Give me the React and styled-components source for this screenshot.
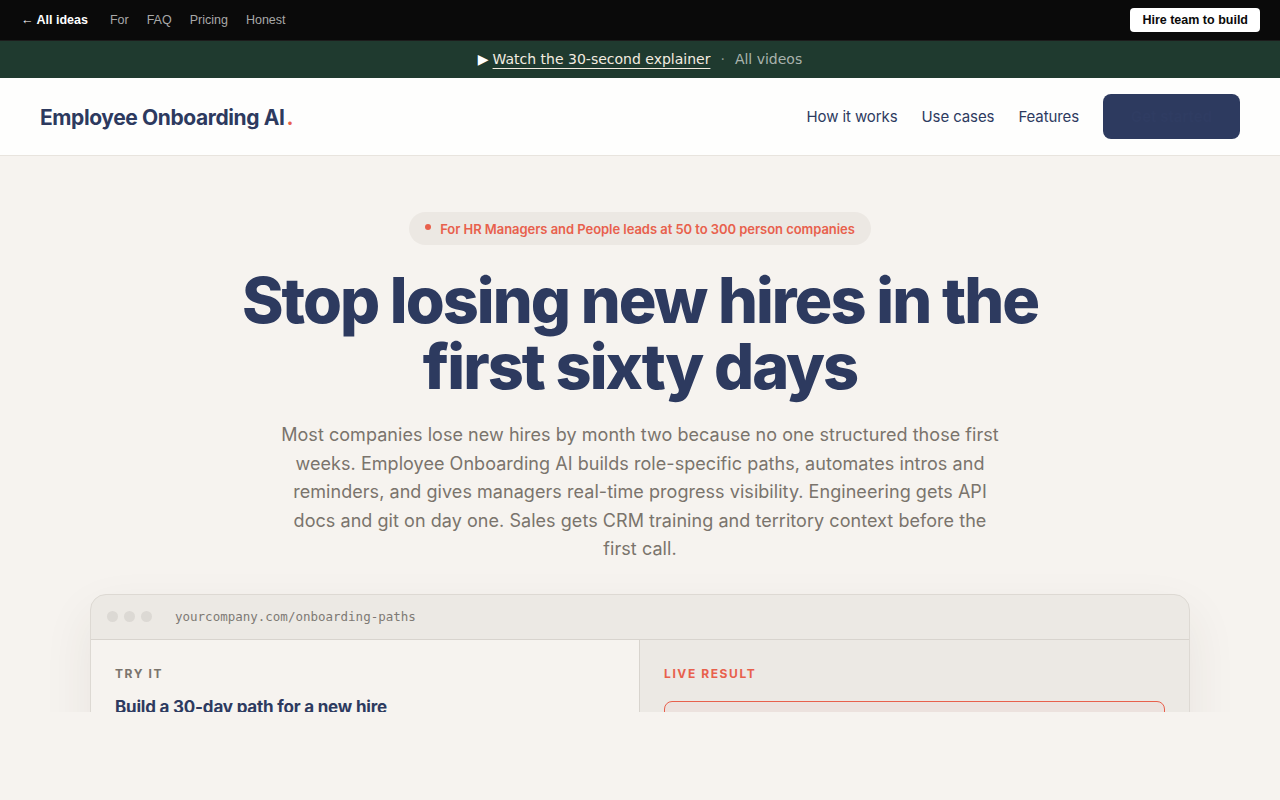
import React from 'react';
import styled, { createGlobalStyle } from 'styled-components';

const GlobalStyle = createGlobalStyle`
  html, body {
    margin: 0;
    padding: 0;
    background: #f6f3ef;
  }
  * {
    box-sizing: border-box;
  }
`;

const Page = styled.div`
  height: 712px;
  overflow: hidden;
  background: #f6f3ef;
  font-family: 'Inter', 'Noto Sans', sans-serif;
`;

const TopBar = styled.div`
  height: 41px;
  background: #0a0a0a;
  border-bottom: 1px solid #1c1c1c;
  display: flex;
  align-items: center;
  justify-content: space-between;
  padding: 0 20px 0 21px;
  font-family: 'Liberation Sans', Arial, sans-serif;
  font-size: 12.5px;
`;

const TopLinks = styled.div`
  display: flex;
  align-items: center;
  gap: 18px;
`;

const TopLink = styled.a`
  color: ${p => (p.$strong ? '#ffffff' : '#a8a8a8')};
  font-weight: ${p => (p.$strong ? 700 : 400)};
  margin-right: ${p => (p.$strong ? '4px' : '0')};
  text-decoration: none;
`;

const HireButton = styled.a`
  background: #ffffff;
  color: #0a0a0a;
  font-weight: 700;
  font-size: 12.5px;
  padding: 5px 12px;
  border-radius: 4px;
  text-decoration: none;
`;

const VideoBanner = styled.div`
  height: 37px;
  background: #1f3a2f;
  display: flex;
  align-items: center;
  justify-content: center;
  gap: 8px;
  padding-bottom: 1px;
  font-family: 'DejaVu Sans', Verdana, sans-serif;
  font-size: 14px;
  color: #a9b3ad;
`;

const WatchLink = styled.a`
  color: #f3ece0;
  text-decoration: underline;
  text-underline-offset: 4px;
  &::before {
    content: '▶ ';
    color: #ffffff;
    text-decoration: none;
    display: inline-block;
    margin-right: 4px;
  }
`;

const Sep = styled.span`
  color: #8f9a94;
  margin: 0 2px;
`;

const Nav = styled.nav`
  height: 78px;
  background: #fefefd;
  border-bottom: 1px solid #e8e4de;
  display: flex;
  align-items: center;
  justify-content: space-between;
  padding: 0 40px;
`;

const Logo = styled.div`
  font-size: 21px;
  font-weight: 700;
  color: #2d3a5f;
  letter-spacing: -0.4px;
  margin-top: 2px;
  span {
    color: #e8604c;
    margin-left: 2px;
  }
`;

const NavLinks = styled.div`
  display: flex;
  align-items: center;
  gap: 24px;
`;

const NavLink = styled.a`
  font-size: 15px;
  color: #2d3a5f;
  text-decoration: none;
  letter-spacing: -0.1px;
  margin-top: -1px;
`;

const NavCta = styled.a`
  display: block;
  width: 137px;
  height: 45px;
  border-radius: 8px;
  background: #2d3a5f;
  color: #2f3c62;
  font-size: 15px;
  font-weight: 600;
  line-height: 45px;
  text-align: center;
  text-decoration: none;
`;

const Hero = styled.section`
  display: flex;
  flex-direction: column;
  align-items: center;
  padding-top: 56px;
`;

const Badge = styled.div`
  display: inline-flex;
  align-items: center;
  gap: 9px;
  height: 33px;
  padding: 0 16px;
  border-radius: 999px;
  background: #ece8e3;
  color: #e8604c;
  font-size: 13px;
  font-weight: 600;
  letter-spacing: -0.05px;
  &::before {
    content: '';
    width: 6px;
    height: 6px;
    border-radius: 50%;
    background: #e8604c;
    margin-top: -3px;
  }
`;

const Headline = styled.h1`
  margin: 22px 0 0;
  max-width: 860px;
  text-align: center;
  font-size: 63px;
  line-height: 66px;
  font-weight: 800;
  letter-spacing: -2px;
  color: #2d3a5f;
`;

const Lead = styled.p`
  margin: 22px 0 0;
  max-width: 724px;
  text-align: center;
  font-size: 18px;
  line-height: 28.6px;
  color: #7a746c;
  letter-spacing: 0.05px;
`;

const Browser = styled.div`
  margin-top: 30px;
  width: 1100px;
  border: 1px solid #ddd9d3;
  border-radius: 16px;
  overflow: hidden;
  background: #ece9e4;
  box-shadow: 0 20px 50px rgba(60, 50, 40, 0.08);
`;

const BrowserBar = styled.div`
  height: 45px;
  display: flex;
  align-items: center;
  gap: 6px;
  padding: 0 16px;
  border-bottom: 1px solid #d8d4ce;
`;

const Dot = styled.span`
  width: 11px;
  height: 11px;
  border-radius: 50%;
  background: #dcd9d4;
`;

const Url = styled.span`
  margin-left: 17px;
  font-family: 'DejaVu Sans Mono', 'Liberation Mono', monospace;
  font-size: 12.5px;
  color: #7e7a74;
`;

const BrowserBody = styled.div`
  display: grid;
  grid-template-columns: 548px 1fr;
  min-height: 200px;
`;

const Pane = styled.div`
  padding: 26px 24px;
  background: ${p => (p.$tinted ? '#ece9e4' : '#f6f3ef')};
  border-left: ${p => (p.$tinted ? '1px solid #d8d4ce' : 'none')};
`;

const Eyebrow = styled.div`
  font-size: 12px;
  font-weight: 700;
  letter-spacing: 1.6px;
  text-transform: uppercase;
  color: ${p => (p.$accent ? '#e8604c' : '#7a746c')};
`;

const PaneTitle = styled.h3`
  margin: 16px 0 0;
  font-size: 17px;
  font-weight: 700;
  letter-spacing: -0.2px;
  color: #2d3a5f;
`;

const ResultBox = styled.div`
  margin-top: 20px;
  height: 120px;
  border: 1px solid #e8604c;
  border-radius: 8px;
  background: #ece2de;
`;

export default function App() {
  return (
    <>
      <GlobalStyle />
      <Page>
        <TopBar>
          <TopLinks>
            <TopLink $strong href="#">← All ideas</TopLink>
            <TopLink href="#">For</TopLink>
            <TopLink href="#">FAQ</TopLink>
            <TopLink href="#">Pricing</TopLink>
            <TopLink href="#">Honest</TopLink>
          </TopLinks>
          <HireButton href="#">Hire team to build</HireButton>
        </TopBar>

        <VideoBanner>
          <WatchLink href="#">Watch the 30-second explainer</WatchLink>
          <Sep>·</Sep>
          <span>All videos</span>
        </VideoBanner>

        <Nav>
          <Logo>
            Employee Onboarding AI<span>.</span>
          </Logo>
          <NavLinks>
            <NavLink href="#">How it works</NavLink>
            <NavLink href="#">Use cases</NavLink>
            <NavLink href="#">Features</NavLink>
            <NavCta href="#">Get started</NavCta>
          </NavLinks>
        </Nav>

        <Hero>
          <Badge>For HR Managers and People leads at 50 to 300 person companies</Badge>
          <Headline>Stop losing new hires in the first sixty days</Headline>
          <Lead>
            Most companies lose new hires by month two because no one structured those first
            weeks. Employee Onboarding AI builds role-specific paths, automates intros and
            reminders, and gives managers real-time progress visibility. Engineering gets API
            docs and git on day one. Sales gets CRM training and territory context before the
            first call.
          </Lead>

          <Browser>
            <BrowserBar>
              <Dot />
              <Dot />
              <Dot />
              <Url>yourcompany.com/onboarding-paths</Url>
            </BrowserBar>
            <BrowserBody>
              <Pane>
                <Eyebrow>Try it</Eyebrow>
                <PaneTitle>Build a 30-day path for a new hire</PaneTitle>
              </Pane>
              <Pane $tinted>
                <Eyebrow $accent>Live result</Eyebrow>
                <ResultBox />
              </Pane>
            </BrowserBody>
          </Browser>
        </Hero>
      </Page>
    </>
  );
}
